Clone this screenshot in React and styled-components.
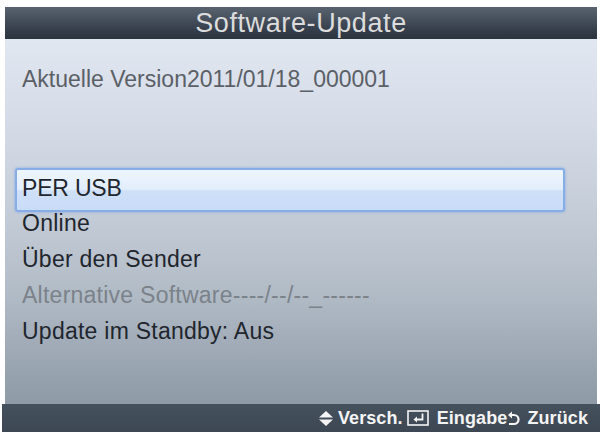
import React from "react";
import styled, { createGlobalStyle } from "styled-components";

const Global = createGlobalStyle`
  html, body { margin: 0; padding: 0; background: #ffffff; }
  body { font-family: "Liberation Sans", Arial, sans-serif; }
`;

const Screen = styled.div`
  width: 600px;
  height: 432px;
  display: flex;
  flex-direction: column;
  padding-top: 7px;
  box-sizing: border-box;
  background: #ffffff;
  overflow: hidden;
`;

const Header = styled.div`
  margin: 0 3px 0 5px;
  height: 32px;
  display: flex;
  align-items: center;
  justify-content: center;
  background: linear-gradient(#58636f 0%, #434d59 45%, #333c48 75%, #2b333e 100%);
  color: #dcdcdc;
  font-size: 27px;
  letter-spacing: 0.6px;
  line-height: 32px;
`;

const Body = styled.div`
  flex: 1;
  margin: 0 3px 0 5px;
  display: flex;
  flex-direction: column;
  padding: 26px 0 0 0;
  background: linear-gradient(#e1e7f1 0%, #d6dde8 20%, #c6ced9 45%, #b1bbc6 70%, #97a2af 92%, #8f9aa7 100%);
`;

const Info = styled.div`
  height: 28px;
  line-height: 28px;
  padding-left: 17px;
  font-size: 23px;
  letter-spacing: 0;
  color: #5b6067;
`;

const List = styled.div`
  display: flex;
  flex-direction: column;
  margin-top: 78px;
`;

const Row = styled.div`
  position: relative;
  height: ${(p) => (p.$selected ? 34 : 36)}px;
  line-height: ${(p) => (p.$selected ? 34 : 36)}px;
  padding-left: 17px;
  font-size: 23px;
  letter-spacing: 0.25px;
  color: ${(p) => (p.$disabled ? "#7b828a" : "#1f262e")};

  ${(p) =>
    p.$selected &&
    `
    letter-spacing: -0.2px;
    &::before {
      content: "";
      position: absolute;
      left: 10px;
      right: 32px;
      top: -3px;
      bottom: -7px;
      border: 2px solid #86ade6;
      border-radius: 3px;
      box-shadow: 0 0 3px rgba(120, 160, 230, 0.8);
      background: linear-gradient(#eef5fe 0%, #e3eefc 48%, #cfe0f8 52%, #c9dcf7 100%);
    }
  `}
`;

const RowText = styled.span`
  position: relative;
`;

const Footer = styled.div`
  height: 28px;
  margin-left: 2px;
  display: flex;
  align-items: center;
  justify-content: flex-end;
  padding-right: 12px;
  background: linear-gradient(#46515e 0%, #3d4754 100%);
  color: #f4f4f4;
  font-size: 18px;
  font-weight: 700;
  letter-spacing: 0.1px;
`;

const Hint = styled.div`
  display: flex;
  align-items: center;
  gap: ${(p) => p.$gap ?? 6}px;
  margin-left: ${(p) => p.$ml ?? 0}px;
`;

const Icon = styled.svg`
  display: block;
  flex: none;
`;

export default function App() {
  return (
    <>
      <Global />
      <Screen>
        <Header>Software-Update</Header>
        <Body>
          <Info>Aktuelle Version2011/01/18_000001</Info>
          <List>
            <Row $selected>
              <RowText>PER USB</RowText>
            </Row>
            <Row>Online</Row>
            <Row>Über den Sender</Row>
            <Row $disabled>Alternative Software----/--/--_------</Row>
            <Row>Update im Standby: Aus</Row>
          </List>
        </Body>
        <Footer>
          <Hint $gap={5}>
            <Icon width="14" height="15" viewBox="0 0 14 15">
              <path d="M7 0 L14 6.5 H0 Z" fill="#f4f4f4" />
              <path d="M0 8.5 H14 L7 15 Z" fill="#f4f4f4" />
            </Icon>
            <span>Versch.</span>
          </Hint>
          <Hint $gap={8} $ml={4}>
            <Icon width="22" height="16" viewBox="0 0 22 16">
              <rect x="1" y="1" width="20" height="14" fill="none" stroke="#f4f4f4" strokeWidth="1.6" />
              <path d="M15.5 3.5 V9.5 H8" fill="none" stroke="#f4f4f4" strokeWidth="1.8" />
              <path d="M10 6.5 L6.5 9.5 L10 12.5 Z" fill="#f4f4f4" />
            </Icon>
            <span>Eingabe</span>
          </Hint>
          <Hint $gap={7} $ml={0}>
            <Icon width="13" height="15" viewBox="0 0 13 15">
              <path d="M3 4 H7 A4.5 4.5 0 0 1 7 13 H2" fill="none" stroke="#f4f4f4" strokeWidth="2.2" />
              <path d="M5 0.5 L1 4 L5 7.5 Z" fill="#f4f4f4" />
            </Icon>
            <span>Zurück</span>
          </Hint>
        </Footer>
      </Screen>
    </>
  );
}
